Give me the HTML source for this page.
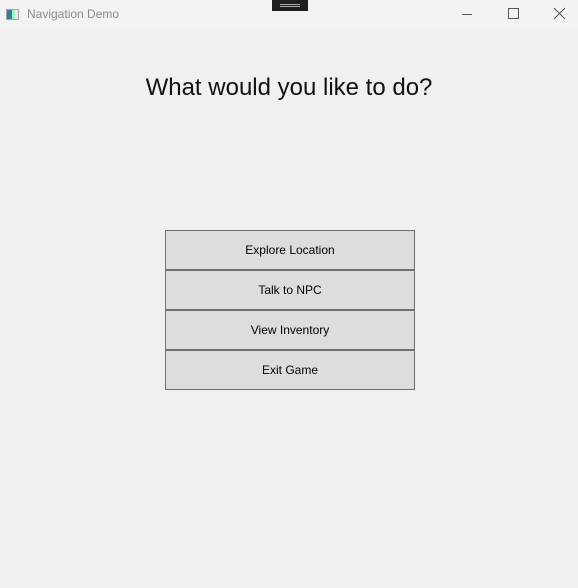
<!DOCTYPE html>
<html><head><meta charset="utf-8"><style>
html,body{margin:0;padding:0;}
body{width:578px;height:588px;background:#f0f0f0;position:relative;overflow:hidden;font-family:"Segoe UI","Liberation Sans",sans-serif;}
.tb{position:absolute;left:0;top:0;width:578px;height:29px;background:#f3f3f3;}
.ttl{position:absolute;left:27px;top:7px;font-size:12px;color:#8a8a8a;}
.ico{position:absolute;left:6px;top:9px;width:13px;height:11px;border:1px solid #9aa;background:linear-gradient(90deg,#3a7a9a 0 45%,#8fb 45% 70%,#e8e8e8 70%);box-sizing:border-box;}
.grip{position:absolute;left:272px;top:0;width:36px;height:11px;background:#1e1e1e;}
.grip:after{content:"";position:absolute;left:8px;top:4px;width:20px;border-top:1px solid #aaa;border-bottom:1px solid #aaa;box-sizing:border-box;height:3px;}
h1{position:absolute;left:0;width:578px;top:74px;margin:0;text-align:center;font-weight:normal;font-size:24px;color:#111;}
.btn{position:absolute;left:165px;width:250px;height:40px;box-sizing:border-box;border:1px solid #707070;background:#dddddd;text-align:center;line-height:38px;font-size:12px;color:#000;}
</style></head><body>
<div class="tb">
<div class="ico"></div>
<div class="ttl">Navigation Demo</div>
<div class="grip"></div>
<svg style="position:absolute;left:460px;top:7px" width="110" height="14">
<line x1="2" y1="7.5" x2="12" y2="7.5" stroke="#555" stroke-width="1"/>
<rect x="48.5" y="1.5" width="10" height="10" fill="none" stroke="#555"/>
<line x1="94" y1="1" x2="105" y2="12" stroke="#555"/>
<line x1="105" y1="1" x2="94" y2="12" stroke="#555"/>
</svg>
</div>
<h1>What would you like to do?</h1>
<div class="btn" style="top:230px">Explore Location</div>
<div class="btn" style="top:270px">Talk to NPC</div>
<div class="btn" style="top:310px">View Inventory</div>
<div class="btn" style="top:350px">Exit Game</div>
</body></html>
